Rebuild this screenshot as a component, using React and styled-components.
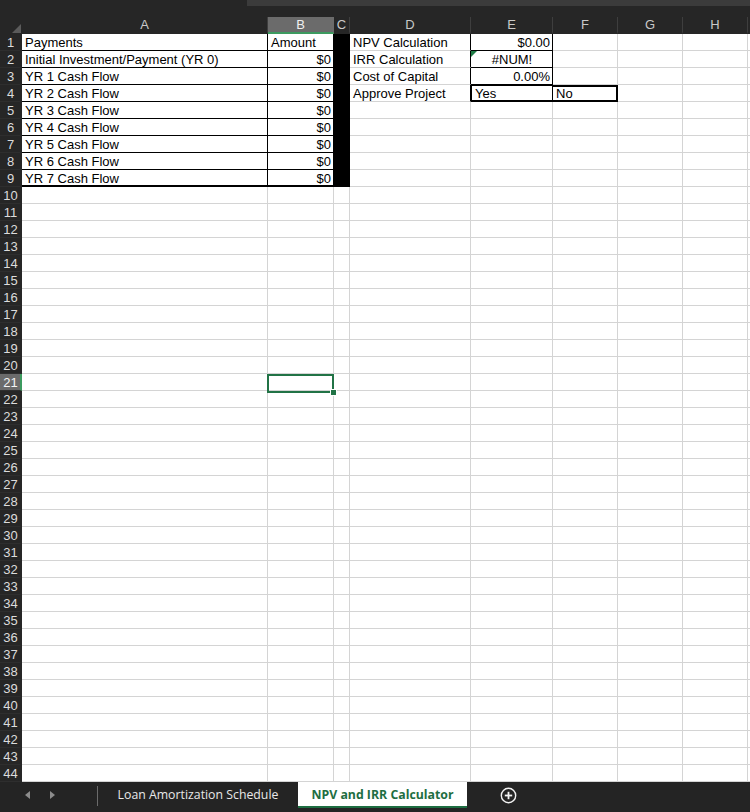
import styled, { createGlobalStyle } from "styled-components";

const GlobalStyle = createGlobalStyle`
  html, body {
    margin: 0;
    padding: 0;
    background: #262626;
  }
  body {
    font-family: "Liberation Sans", Arial, sans-serif;
  }
`;

const COLS = ["A", "B", "C", "D", "E", "F", "G", "H", "I"];
const ROWS = Array.from({ length: 44 }, (_, i) => i + 1);
const thin = "1px solid #000";
const thick = "2px solid #000";
const green = "#217346";

const DATA = {
  A1: "Payments",
  B1: "Amount",
  D1: "NPV Calculation",
  E1: "$0.00",
  A2: "Initial Investment/Payment (YR 0)",
  D2: "IRR Calculation",
  E2: "#NUM!",
  A3: "YR 1 Cash Flow",
  D3: "Cost of Capital",
  E3: "0.00%",
  A4: "YR 2 Cash Flow",
  D4: "Approve Project",
  E4: "Yes",
  F4: "No",
  A5: "YR 3 Cash Flow",
  A6: "YR 4 Cash Flow",
  A7: "YR 5 Cash Flow",
  A8: "YR 6 Cash Flow",
  A9: "YR 7 Cash Flow",
};
for (let r = 2; r <= 9; r++) DATA["B" + r] = "$0";

const ALIGN = { E1: "right", E2: "center", E3: "right" };

function cellProps(col, row) {
  const p = {};
  const key = col + row;
  if (col === "B" && row >= 2 && row <= 9) p.$align = "right";
  if (ALIGN[key]) p.$align = ALIGN[key];
  if (row <= 9 && (col === "A" || col === "B" || col === "C")) {
    p.$bottom = row === 9 ? thick : thin;
    p.$right = thin;
    if (col === "C") p.$fill = "#000";
  }
  if (col === "D" && row <= 4) p.$right = thin;
  if (col === "E" && row <= 3) {
    p.$right = thin;
    p.$bottom = thin;
  }
  if (key === "E4") {
    p.$top = thin;
    p.$left = thin;
    p.$bottom = thick;
    p.$right = thin;
    p.$padTop = 1;
  }
  if (key === "F4") {
    p.$top = thick;
    p.$bottom = thick;
    p.$right = thick;
    p.$padTop = 0;
  }
  return p;
}

const Page = styled.div`
  width: 750px;
  height: 812px;
  display: flex;
  flex-direction: column;
  background: #262626;
  overflow: hidden;
`;

const TopStrip = styled.div`
  height: 17px;
  flex: none;
  display: flex;
  justify-content: flex-end;
  align-items: flex-start;
`;

const ScrollTrack = styled.div`
  width: 503px;
  height: 6px;
  background: #3b3b3b;
`;

const Sheet = styled.div`
  flex: none;
  display: grid;
  grid-template-columns: 22px 246px 66px 16px 121px 82px 65px 65px 65px 1fr;
  grid-template-rows: 17px repeat(44, 17px);
  overflow: hidden;
`;

const Corner = styled.div`
  background: #262626;
  display: flex;
  align-items: flex-end;
  justify-content: flex-end;
  padding: 0 1px 1px 0;
`;

const ColHeader = styled.div`
  box-sizing: border-box;
  background: ${(p) => (p.$selected ? "#6b6b6b" : "#262626")};
  border-right: 1px solid ${(p) => (p.$selected ? "#6b6b6b" : "#3e3e3e")};
  border-bottom: 2px solid ${(p) => (p.$selected ? "#3c9a5f" : "#262626")};
  color: ${(p) => (p.$selected ? "#f0f0f0" : "#c9c9c9")};
  font-size: 13px;
  line-height: 16px;
  text-align: center;
  white-space: nowrap;
  overflow: hidden;
`;

const RowHeader = styled.div`
  box-sizing: border-box;
  background: ${(p) => (p.$selected ? "#6b6b6b" : "#262626")};
  border-right: 2px solid ${(p) => (p.$selected ? "#3c9a5f" : "#262626")};
  border-bottom: 1px solid #2e2e2e;
  color: ${(p) => (p.$selected ? "#f4f4f4" : "#dcdcdc")};
  font-size: 13px;
  line-height: 14px;
  padding-top: 2px;
  text-align: center;
  padding-left: 1px;
`;

const Cell = styled.div`
  box-sizing: border-box;
  position: relative;
  background: ${(p) => p.$fill || "#fff"};
  border-top: ${(p) => p.$top || "none"};
  border-left: ${(p) => p.$left || "none"};
  border-right: ${(p) => p.$right || "1px solid #d4d4d4"};
  border-bottom: ${(p) => p.$bottom || "1px solid #d4d4d4"};
  color: #000;
  font-size: 13px;
  line-height: 14px;
  padding: ${(p) => (p.$padTop ?? 2)}px 2px 0 3px;
  text-align: ${(p) => p.$align || "left"};
  white-space: nowrap;
`;

const ErrorFlag = styled.span`
  position: absolute;
  top: 0;
  left: 0;
  width: 0;
  height: 0;
  border-top: 6px solid #1e7b45;
  border-right: 6px solid transparent;
`;

const Selection = styled.span`
  position: absolute;
  top: 0;
  left: -1px;
  right: -1px;
  bottom: -3px;
  border: 2px solid ${green};
  z-index: 2;
`;

const FillHandle = styled.span`
  position: absolute;
  right: -5px;
  bottom: -5px;
  width: 5px;
  height: 5px;
  background: ${green};
  border: 1px solid #fff;
`;

const TabBar = styled.div`
  flex: 1;
  display: flex;
  align-items: flex-start;
  background: #242424;
`;

const NavArea = styled.div`
  width: 97px;
  height: 26px;
  display: flex;
  align-items: center;
  gap: 20px;
  padding-left: 25px;
  box-sizing: border-box;
`;

const Divider = styled.div`
  width: 1px;
  height: 20px;
  margin-top: 4px;
  background: #6b6b6b;
`;

const Tab = styled.div`
  box-sizing: border-box;
  width: ${(p) => p.$width}px;
  height: 26px;
  display: flex;
  align-items: center;
  justify-content: center;
  font-family: "Open Sans", "Noto Sans", sans-serif;
  font-size: 12.3px;
  white-space: nowrap;
  background: ${(p) => (p.$active ? "#fff" : "transparent")};
  color: ${(p) => (p.$active ? "#1e6e42" : "#e8e8e8")};
  font-weight: ${(p) => (p.$active ? 700 : 400)};
  border-bottom: 2px solid ${(p) => (p.$active ? "#1e6e42" : "transparent")};
`;

const AddSheet = styled.div`
  height: 26px;
  display: flex;
  align-items: center;
  margin-left: 33px;
`;

function Arrow({ dir }) {
  return (
    <svg width="5" height="8" viewBox="0 0 5 8">
      <polygon
        points={dir === "left" ? "5,0 5,8 0,4" : "0,0 0,8 5,4"}
        fill="#8c8c8c"
      />
    </svg>
  );
}

function PlusCircle() {
  return (
    <svg width="17" height="17" viewBox="0 0 17 17">
      <circle cx="8.5" cy="8.5" r="7.2" fill="none" stroke="#f2f2f2" strokeWidth="1.4" />
      <line x1="8.5" y1="4.8" x2="8.5" y2="12.2" stroke="#f2f2f2" strokeWidth="1.8" />
      <line x1="4.8" y1="8.5" x2="12.2" y2="8.5" stroke="#f2f2f2" strokeWidth="1.8" />
    </svg>
  );
}

function SheetGrid() {
  return (
    <Sheet>
      <Corner>
        <svg width="9" height="9" viewBox="0 0 9 9">
          <polygon points="9,0 9,9 0,9" fill="#5b5b5b" />
        </svg>
      </Corner>
      {COLS.map((c) => (
        <ColHeader key={c} $selected={c === "B"}>
          {c === "I" ? "" : c}
        </ColHeader>
      ))}
      {ROWS.map((r) => [
        <RowHeader key={"h" + r} $selected={r === 21}>
          {r}
        </RowHeader>,
        ...COLS.map((c) => {
          const key = c + r;
          return (
            <Cell key={key} {...cellProps(c, r)}>
              {key === "E2" && <ErrorFlag />}
              {DATA[key]}
              {key === "B21" && (
                <Selection>
                  <FillHandle />
                </Selection>
              )}
            </Cell>
          );
        }),
      ])}
    </Sheet>
  );
}

export default function App() {
  return (
    <Page>
      <GlobalStyle />
      <TopStrip>
        <ScrollTrack />
      </TopStrip>
      <SheetGrid />
      <TabBar>
        <NavArea>
          <Arrow dir="left" />
          <Arrow dir="right" />
        </NavArea>
        <Divider />
        <Tab $width={200}>Loan Amortization Schedule</Tab>
        <Tab $width={169} $active>
          NPV and IRR Calculator
        </Tab>
        <AddSheet>
          <PlusCircle />
        </AddSheet>
      </TabBar>
    </Page>
  );
}
